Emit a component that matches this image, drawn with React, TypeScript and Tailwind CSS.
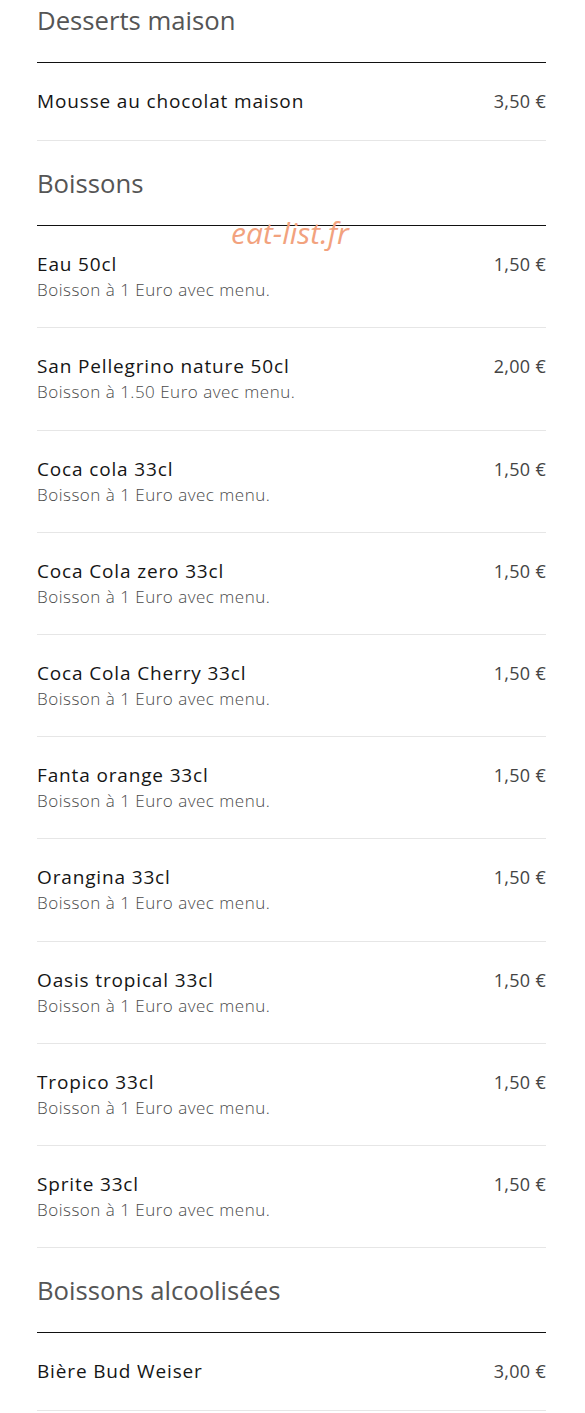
import React from "react";

type Item = { name: string; price: string; desc?: string };
type Section = { title: string; items: Item[] };

const sections: Section[] = [
  { title: "Desserts maison", items: [{ name: "Mousse au chocolat maison", price: "3,50 €" }] },
  {
    title: "Boissons",
    items: [
      { name: "Eau 50cl", price: "1,50 €", desc: "Boisson à 1 Euro avec menu." },
      { name: "San Pellegrino nature 50cl", price: "2,00 €", desc: "Boisson à 1.50 Euro avec menu." },
      { name: "Coca cola 33cl", price: "1,50 €", desc: "Boisson à 1 Euro avec menu." },
      { name: "Coca Cola zero 33cl", price: "1,50 €", desc: "Boisson à 1 Euro avec menu." },
      { name: "Coca Cola Cherry 33cl", price: "1,50 €", desc: "Boisson à 1 Euro avec menu." },
      { name: "Fanta orange 33cl", price: "1,50 €", desc: "Boisson à 1 Euro avec menu." },
      { name: "Orangina 33cl", price: "1,50 €", desc: "Boisson à 1 Euro avec menu." },
      { name: "Oasis tropical 33cl", price: "1,50 €", desc: "Boisson à 1 Euro avec menu." },
      { name: "Tropico 33cl", price: "1,50 €", desc: "Boisson à 1 Euro avec menu." },
      { name: "Sprite 33cl", price: "1,50 €", desc: "Boisson à 1 Euro avec menu." },
    ],
  },
  { title: "Boissons alcoolisées", items: [{ name: "Bière Bud Weiser", price: "3,00 €" }] },
];

export default function App() {
  return (
    <div
      className="relative w-[585px] bg-white pl-[37px] pr-[39px] pb-10"
      style={{ fontFamily: '"Open Sans", "Noto Sans", sans-serif' }}
    >
      {sections.map((s, si) => (
        <div key={si}>
          <div className={`${si === 0 ? "pt-[5px]" : "pt-[27px]"} pb-[25px] border-b border-[#111]`}>
            <h2 className="text-[25.7px] leading-[32px] text-[#555]">{s.title}</h2>
          </div>
          {s.items.map((it, ii) => (
            <div key={ii} className="flex justify-between border-b border-[#e6e6e6] pt-[24px] pb-[25.2px]">
              <div>
                <div className="text-[19px] leading-[28px] font-medium tracking-[0.85px] text-[#151515]">
                  {it.name}
                </div>
                {it.desc && (
                  <div className="text-[17px] leading-[24px] font-light tracking-[0.5px] text-[#4a4a4a]">
                    {it.desc}
                  </div>
                )}
              </div>
              <div className="text-[18px] leading-[28px] tracking-[0.3px] text-[#444]">{it.price}</div>
            </div>
          ))}
        </div>
      ))}
      <div className="absolute left-[231px] top-[213px] text-[30px] leading-[40px] italic text-[#f2a27e] pointer-events-none">
        eat-list.fr
      </div>
    </div>
  );
}
